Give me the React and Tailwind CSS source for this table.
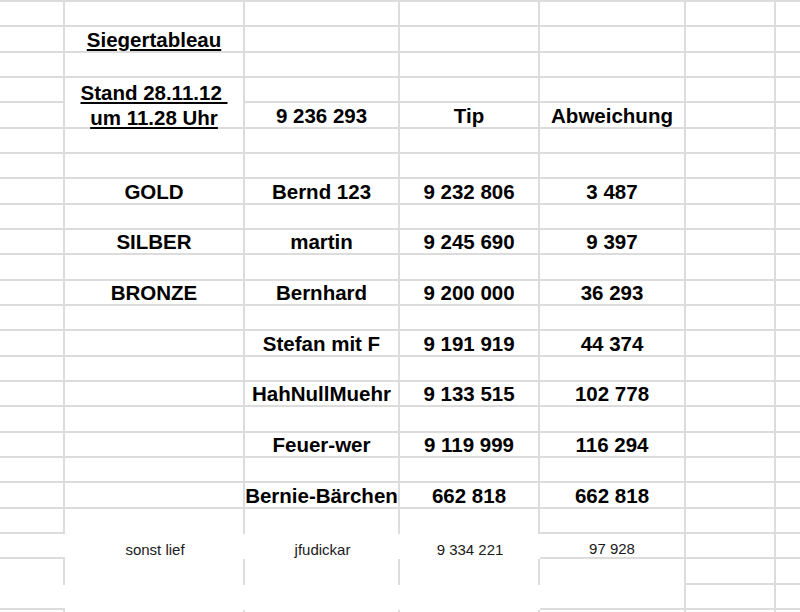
import React from "react";

const bold = "font-bold text-[20.5px] text-black whitespace-nowrap";
const small = "text-[15px] text-[#1a1a1a] whitespace-nowrap pt-[7px]";

const content = {
  1: { 1: <span className={`${bold} underline decoration-2 underline-offset-2 pt-[2px]`}>Siegertableau</span> },
  4: { 2: "9 236 293", 3: "Tip", 4: "Abweichung" },
  7: { 1: "GOLD", 2: "Bernd 123", 3: "9 232 806", 4: "3 487" },
  9: { 1: "SILBER", 2: "martin", 3: "9 245 690", 4: "9 397" },
  11: { 1: "BRONZE", 2: "Bernhard", 3: "9 200 000", 4: "36 293" },
  13: { 2: "Stefan mit F", 3: "9 191 919", 4: "44 374" },
  15: { 2: "HahNullMuehr", 3: "9 133 515", 4: "102 778" },
  17: { 2: "Feuer-wer", 3: "9 119 999", 4: "116 294" },
  19: { 2: "Bernie-Bärchen", 3: "662 818", 4: "662 818" },
};

const smallRow = { 1: "sonst lief", 2: "jfudickar", 3: "9 334 221", 4: "97 928" };

function Cell({ r, c }) {
  let right = c < 6;
  let bottom = true;
  if (r === 20 && c >= 1 && c <= 3) bottom = false;
  if (r === 21 || r === 23) {
    if (c <= 3) right = false;
    if (c >= 1 && c <= 3) bottom = false;
  }
  if (r === 22) bottom = c >= 5;

  const base = `flex items-center justify-center border-[#dcdcdc] ${right ? "border-r-2" : ""} ${bottom ? "border-b-2" : ""}`;

  if (r === 3 && c === 1) {
    return (
      <div className={`${base} row-span-2 flex-col pt-[4px]`}>
        <span className={`${bold} leading-[25px] underline decoration-2 underline-offset-2 whitespace-pre`}>{"Stand 28.11.12 "}</span>
        <span className={`${bold} leading-[25px] underline decoration-2 underline-offset-2 whitespace-pre`}>um 11.28 Uhr</span>
      </div>
    );
  }

  let inner = null;
  if (r === 21 && smallRow[c]) {
    inner = <span className={small}>{smallRow[c]}</span>;
  } else if (content[r] && content[r][c] !== undefined) {
    const v = content[r][c];
    inner = typeof v === "string" ? <span className={`${bold} pt-[2px]`}>{v}</span> : v;
  }
  return <div className={base}>{inner}</div>;
}

export default function App() {
  const cells = [];
  for (let r = 0; r < 25; r++) {
    for (let c = 0; c < 7; c++) {
      if (r === 4 && c === 1) continue;
      cells.push(<Cell key={`${r}-${c}`} r={r} c={c} />);
    }
  }
  return (
    <div className="w-[800px] h-[612px] overflow-hidden bg-white font-['Liberation_Sans',Arial,sans-serif]">
      <div className="border-t-2 border-[#dcdcdc] grid grid-cols-[65px_180px_155px_140px_146px_90px_1fr] grid-rows-[25px_26px_25px_25px_26px_25px_25px_26px_25px_25px_26px_25px_25px_26px_25px_25px_26px_25px_25px_26px_25px_25px_26px_25px_25px]">
        {cells}
      </div>
    </div>
  );
}
